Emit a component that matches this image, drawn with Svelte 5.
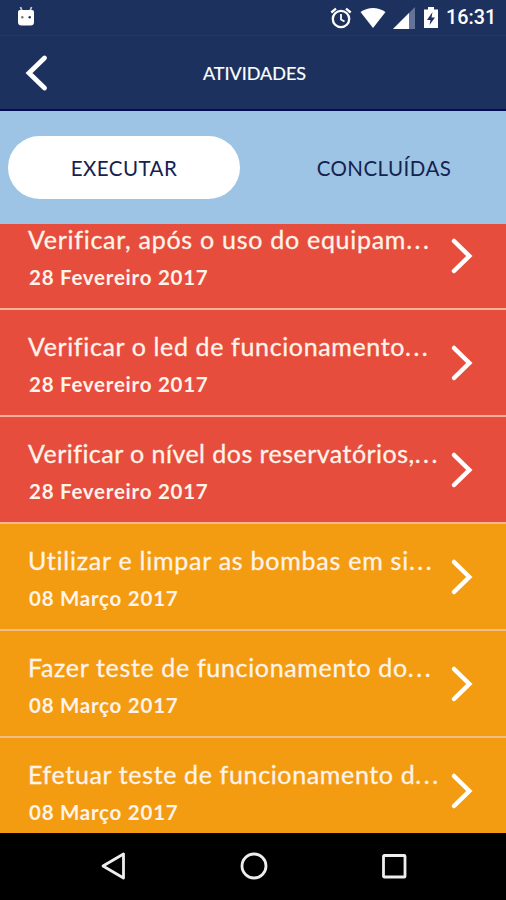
<script lang="ts">
  type Task = {
    title: string;
    date: string;
    status: "late" | "pending";
    tracking: number;
  };

  let activeTab = $state("EXECUTAR");

  const tabs = ["EXECUTAR", "CONCLUÍDAS"];

  const tasks: Task[] = [
    { title: "Verificar, após o uso do equipam", date: "28 Fevereiro 2017", status: "late", tracking: 0.72 },
    { title: "Verificar o led de funcionamento", date: "28 Fevereiro 2017", status: "late", tracking: 0.63 },
    { title: "Verificar o nível dos reservatórios,", date: "28 Fevereiro 2017", status: "late", tracking: 0.46 },
    { title: "Utilizar e limpar as bombas em si", date: "08 Março 2017", status: "pending", tracking: 0.75 },
    { title: "Fazer teste de funcionamento do", date: "08 Março 2017", status: "pending", tracking: 0.66 },
    { title: "Efetuar teste de funcionamento d", date: "08 Março 2017", status: "pending", tracking: 0.64 },
  ];
</script>

<div class="screen">
  <div class="status-bar">
    <svg class="robot" width="18" height="21" viewBox="0 0 18 21">
      <path d="M3.500 1 5 5M14.500 1 13 5" stroke="#c5cbe0" stroke-width="1.800" />
      <path d="M1 6Q1 4 3 4H15Q17 4 17 6V16Q17 19.500 13.500 19.500H4.500Q1 19.500 1 16Z" fill="#fff" />
      <circle cx="5.300" cy="11.300" r="1.200" fill="#777" />
      <circle cx="12.700" cy="11.300" r="1.200" fill="#1d315f" />
    </svg>
    <div class="indicators">
      <svg width="22" height="22" viewBox="0 0 22 22" fill="none" stroke="#fff">
        <circle cx="11" cy="12" r="8.200" stroke-width="2.300" />
        <path d="M11 7V12.500L14.500 14.500" stroke-width="1.800" />
        <path d="M1.300 5.500 6 1.700M20.700 5.500 16 1.700" stroke-width="2.300" />
      </svg>
      <svg width="26" height="22" viewBox="0 0 26 22">
        <path d="M.5 5Q13-3 25.500 5L13 21Z" fill="#fff" />
      </svg>
      <svg width="22" height="22" viewBox="0 0 22 22">
        <path d="M0 22 22 0V22Z" fill="#64739a" />
        <path d="M0 22 16 6V22Z" fill="#fff" />
      </svg>
      <svg width="16" height="22" viewBox="0 0 16 22">
        <path d="M5 0H11V2.500H15V21H1V2.500H5Z" fill="#fff" />
        <path d="M9.500 5 4 13H7.500L6.500 18 12 10.500H8.500Z" fill="#1d315f" />
      </svg>
      <span class="clock">16:31</span>
    </div>
  </div>

  <header>
    <button class="back" aria-label="Voltar">
      <svg width="24" height="38" viewBox="0 0 24 38">
        <path d="M19.500 4 4 19 19.500 34" fill="none" stroke="#fff" stroke-width="4.800" stroke-linecap="round" />
      </svg>
    </button>
    <h1>ATIVIDADES</h1>
  </header>

  <nav>
    {#each tabs as tab}
      <button class="tab" class:active={activeTab === tab} onclick={() => (activeTab = tab)}>
        {tab}
      </button>
    {/each}
  </nav>

  <main>
    {#each tasks as task}
      <div class="task {task.status}">
        <div class="info">
          <div class="title" style:letter-spacing="{task.tracking}px">{task.title}<span class="dots">...</span></div>
          <div class="date">{task.date}</div>
        </div>
        <svg class="chevron" width="24" height="38" viewBox="0 0 24 38">
          <path d="M4 4 19.300 19 4 34" fill="none" stroke="#fff" stroke-width="4.500" stroke-linecap="round" />
        </svg>
      </div>
    {/each}
  </main>

  <div class="nav-bar">
    <svg width="28" height="30" viewBox="0 0 28 30">
      <path d="M4 15 24.500 3V27Z" fill="none" stroke="#eee" stroke-width="2.800" stroke-linejoin="round" />
    </svg>
    <svg width="28" height="30" viewBox="0 0 28 30">
      <circle cx="14" cy="15" r="12" fill="none" stroke="#eee" stroke-width="2.800" />
    </svg>
    <svg width="28" height="30" viewBox="0 0 28 30">
      <rect x="3.500" y="4.500" width="21.500" height="21.500" rx=".8" fill="none" stroke="#eee" stroke-width="2.800" />
    </svg>
  </div>
</div>

<style>
  :global(body) {
    margin: 0;
    background: #000;
  }

  .screen {
    display: flex;
    flex-direction: column;
    width: 506px;
    height: 900px;
    overflow: hidden;
    background: #1d315f;
    color: #fff;
    font-family: Lato, "Open Sans", sans-serif;
  }

  button {
    padding: 0;
    border: none;
    background: none;
    color: inherit;
    font: inherit;
  }

  svg {
    display: block;
    flex: none;
  }

  .status-bar {
    display: flex;
    align-items: center;
    justify-content: space-between;
    height: 35px;
    box-sizing: border-box;
    padding: 0 10px 0 17px;
  }

  .robot {
    margin-top: -3px;
  }

  .indicators {
    display: flex;
    align-items: center;
    gap: 7.500px;
  }

  .clock {
    width: 50px;
    font: 500 19.800px/35px Roboto, sans-serif;
  }

  header {
    display: grid;
    grid-template-columns: 60px 1fr 60px;
    align-items: center;
    height: 76px;
    box-sizing: border-box;
    border-top: 1px solid #21366a;
    border-bottom: 2px solid #040c54;
  }

  .back {
    padding-left: 25px;
  }

  h1 {
    margin: 0 0 0 3px;
    text-align: center;
    font-size: 18px;
    font-weight: 400;
    -webkit-text-stroke: 0.2px currentColor;
  }

  nav {
    display: grid;
    grid-template-columns: 232px 232px;
    gap: 28px;
    height: 113px;
    box-sizing: border-box;
    padding: 25px 8px;
    background: #9dc4e4;
    color: #14224f;
  }

  .tab {
    height: 63px;
    border-radius: 32px;
    font-size: 20.500px;
    letter-spacing: 0.45px;
  }

  .tab.active {
    background: #fff;
  }

  main {
    flex: none;
    height: 609px;
    overflow: hidden;
  }

  .task {
    display: flex;
    justify-content: space-between;
    height: 107px;
    box-sizing: border-box;
    padding: 21px 32px 0 28px;
    border-bottom: 2px solid #f3b39a;
  }

  .task:first-child {
    margin-top: -21px;
  }

  .late {
    background: #e74d3c;
  }

  .pending {
    background: #f39c12;
    border-color: #f1bd82;
  }

  .late:has(+ .pending) {
    border-color: #f5b894;
  }

  .info {
    color: #fff3ea;
    white-space: nowrap;
  }

  .title {
    font-size: 25px;
    line-height: 30px;
    -webkit-text-stroke: 0.3px currentColor;
  }

  .dots {
    letter-spacing: 2.5px;
  }

  .date {
    margin: 9px 0 0 1px;
    font-size: 20.500px;
    font-weight: 700;
    line-height: 28px;
    letter-spacing: 0.75px;
  }

  .chevron {
    margin-top: 13px;
  }

  .nav-bar {
    display: grid;
    grid-template-columns: repeat(3, 28px);
    justify-content: center;
    gap: 112.500px;
    height: 67px;
    padding: 18px 0 0 1px;
    box-sizing: border-box;
    background: #000;
  }
</style>
